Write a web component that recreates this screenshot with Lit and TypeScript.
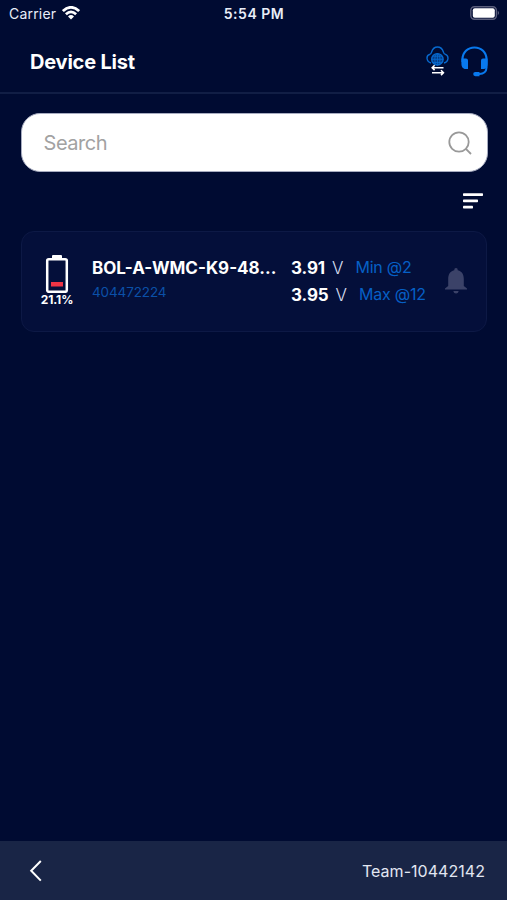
import { LitElement, html, css } from "lit";
import { customElement } from "lit/decorators.js";

@customElement("status-bar")
class StatusBar extends LitElement {
  static styles = css`
    :host { display: grid; grid-template-columns: 1fr auto 1fr; align-items: center; height: 27px; padding: 0 7px 0 9px; box-sizing: border-box; color: #e9edf8; }
    .carrier { display: flex; align-items: center; gap: 6px; font-size: 14px; letter-spacing: 0.2px; }
    .time { font-size: 14px; font-weight: 600; letter-spacing: 0.5px; margin-right: 1px; }
    .battery { justify-self: end; display: block; margin-top: -1px; }
    svg { display: block; }
    .wifi { margin-top: -1px; }
  `;
  render() {
    return html`
      <div class="carrier">
        <span>Carrier</span>
        <svg class="wifi" width="18" height="14" viewBox="0 0 18 14" fill="none" stroke="#fff" stroke-width="2.7">
          <path d="M.9 5.1Q9-2.5 17.1 5.1" />
          <path d="M3.9 8.2Q9 3.4 14.1 8.2" />
          <path d="M6 10.4Q9 7.8 12 10.4L9 13.6Z" fill="#fff" stroke="none" />
        </svg>
      </div>
      <span class="time">5:54 PM</span>
      <svg class="battery" width="30" height="14" viewBox="0 0 30 14">
        <rect x=".8" y=".8" width="25.6" height="12.4" rx="3.6" fill="none" stroke="#5b5f7c" stroke-width="1.4" />
        <rect x="2.8" y="2.2" width="22" height="9.6" rx="2" fill="#fff" />
        <path d="M27.8 4.8Q30 7 27.8 9.2Z" fill="#6a6e88" />
      </svg>
    `;
  }
}

@customElement("device-card")
class DeviceCard extends LitElement {
  static styles = css`
    :host { display: flex; box-sizing: border-box; height: 101px; margin: 0 20px 0 21px; padding: 23px 19px 0 19px; border: 1px solid #0d1945; border-radius: 13px; background: #040f3a; }
    svg { display: block; }
    .charge { width: 32px; display: flex; flex-direction: column; align-items: center; color: #fff; font-size: 12px; line-height: 13px; font-weight: 700; white-space: nowrap; letter-spacing: -0.1px; }
    .name { width: 185px; margin-left: 19px; padding-top: 2px; }
    .title { color: #fff; font-weight: 700; font-size: 17px; line-height: 22px; letter-spacing: 0; white-space: nowrap; }
    .serial { color: #0b50a8; font-size: 13.5px; line-height: 18px; margin-top: 4px; letter-spacing: -0.13px; }
    .cells { margin-left: 14px; width: 148px; }
    .cell { display: flex; align-items: baseline; height: 27px; line-height: 27px; white-space: nowrap; }
    .value { color: #fff; font-weight: 700; font-size: 17px; letter-spacing: -0.1px; }
    .unit { color: #d5dced; font-weight: 300; font-size: 17px; margin-left: 7px; }
    .tag { color: #0660c6; font-size: 16px; margin-left: 12px; letter-spacing: -0.25px; position: relative; top: -1px; }
    .bell { margin-top: 13px; margin-left: 6px; }
  `;
  render() {
    return html`
      <div class="charge">
        <svg width="24" height="38" viewBox="0 0 24 38">
          <rect x="7" y="0" width="10" height="5" rx="1" fill="#fff" />
          <rect x="2.2" y="4.2" width="19.6" height="32.6" rx="1.6" fill="none" stroke="#fff" stroke-width="2.5" />
          <rect x="6" y="27" width="12" height="4.5" fill="#ee3445" />
        </svg>
        <span>21.1%</span>
      </div>
      <div class="name">
        <div class="title">BOL-A-WMC-K9-48...</div>
        <div class="serial">404472224</div>
      </div>
      <div class="cells">
        <div class="cell"><span class="value">3.91</span><span class="unit">V</span><span class="tag">Min @2</span></div>
        <div class="cell"><span class="value">3.95</span><span class="unit">V</span><span class="tag">Max @12</span></div>
      </div>
      <svg class="bell" width="22" height="26" viewBox="0 0 22 26" fill="#3b4268">
        <path d="M11 0Q12.8 0 12.8 2.2C17 3.2 18.8 6.5 18.8 11V18L22 20.4V21.5H0V20.4L3.2 18V11C3.2 6.5 5 3.2 9.2 2.2Q9.2 0 11 0Z" />
        <path d="M8.3 23H13.7Q13.2 25.6 11 25.6T8.3 23Z" />
      </svg>
    `;
  }
}

@customElement("app-root")
class AppRoot extends LitElement {
  static styles = css`
    :host { display: flex; flex-direction: column; height: 900px; background: #000b32; font-family: Inter, sans-serif; color: #fff; overflow: hidden; }
    svg { display: block; }
    .header { display: flex; align-items: center; box-sizing: border-box; height: 67px; padding: 4px 19px 0 30px; border-bottom: 2px solid #111e45; }
    .header h1 { flex: 1; margin: 0; font-size: 20px; font-weight: 700; letter-spacing: -0.2px; line-height: 24px; }
    .cloud { margin-right: 12px; }
    .search { display: flex; align-items: center; justify-content: space-between; box-sizing: border-box; height: 59px; margin: 19px 19.5px 0 20.5px; padding: 0 15px 0 22px; border-radius: 19px; border: 1px solid #a7acc0; background: #fff; color: #a2a2a2; font-size: 20px; letter-spacing: -0.45px; }
    .tools { display: flex; justify-content: flex-end; padding: 21px 24px 0 0; height: 38px; }
    .footer { display: flex; align-items: center; justify-content: space-between; box-sizing: border-box; height: 59px; margin-top: auto; padding: 0 22px 0 29px; background: #192546; color: #e2e7f2; font-size: 16px; letter-spacing: 0.04px; }
  `;
  render() {
    return html`
      <status-bar></status-bar>
      <div class="header">
        <h1>Device List</h1>
        <svg class="cloud" width="23" height="31" viewBox="0 0 23 31" fill="none" stroke="#0769ce" stroke-width="1.4">
          <path d="M5 17C.2 15.6-.4 9.4 4 8.2C5 7.9 5.2 7.2 5.6 6C6.6 2.8 8.6 1 11.5 1S16.4 2.8 17.4 6C17.8 7.2 18 7.9 19 8.2C23.4 9.6 22.8 15.6 18 17" />
          <circle cx="11.4" cy="13.3" r="5.7" fill="#053a82" />
          <ellipse cx="11.4" cy="13.3" rx="2.6" ry="5.7" stroke-width=".9" />
          <path d="M5.6 13.3H17.2M6.6 10.2H16.2M6.6 16.4H16.2M11.4 7.6V19" stroke-width=".9" />
          <path d="M17.5 21.7H6.7M8.6 19.3L6.2 21.7L8.6 24.1M6 26.7H17M15 24.3L17.4 26.7L15 29.1" stroke="#fff" stroke-width="1.6" />
        </svg>
        <svg width="27" height="31" viewBox="0 0 27 31" fill="none" stroke="#0879ee">
          <path d="M1.5 16V13.4C1.5 6.5 6.7 1.5 13.5 1.5S25.5 6.5 25.5 13.4V21.5C25.5 25.5 22.5 28 18.5 28H16" stroke-width="2.1" />
          <path d="M.4 12.5H5Q7 12.5 7 14.4V23H4.8C1.7 23 .4 20.5 .4 17.5ZM26.6 12.5H22Q20 12.5 20 14.4V23H22.2C25.3 23 26.6 20.5 26.6 17.5Z" fill="#0879ee" stroke="none" />
          <path d="M14.3 26H18.5V30.2H14.3A2.1 2.1 0 0 1 14.3 26Z" fill="#0879ee" stroke="none" />
        </svg>
      </div>
      <div class="search">
        <span>Search</span>
        <svg width="24" height="24" viewBox="0 0 24 24" fill="none" stroke="#999" stroke-width="1.8">
          <circle cx="11" cy="11" r="9.7" />
          <path d="M17.9 17.9L23 23" />
        </svg>
      </div>
      <div class="tools">
        <svg width="20" height="16" viewBox="0 0 20 16" fill="#fff">
          <rect y=".2" width="20" height="2.8" rx=".7" />
          <rect y="6.5" width="15" height="2.8" rx=".7" />
          <rect y="12.7" width="10" height="2.8" rx=".7" />
        </svg>
      </div>
      <device-card></device-card>
      <div class="footer">
        <svg width="13" height="22" viewBox="0 0 13 22" fill="none" stroke="#fff" stroke-width="2">
          <path d="M11.8 1L2.2 10.7L11.8 20.6" />
        </svg>
        <span>Team-10442142</span>
      </div>
    `;
  }
}
